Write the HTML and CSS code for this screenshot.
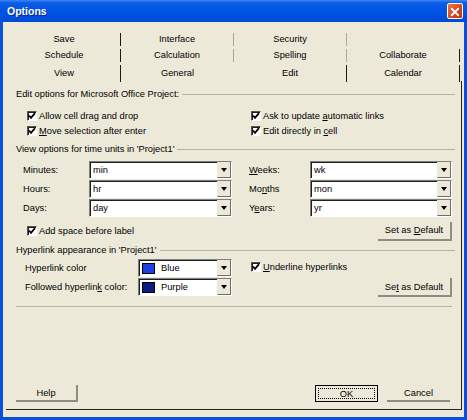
FILE: index.html
```html
<!DOCTYPE html>
<head>
	<link rel="stylesheet" href="styles.css">
</head>
<body>
	<div class="window">
		<div class="titlebar">
			<span class="title">Options</span>
			<span class="close">
				<svg width="16" height="16" viewBox="0 0 16 16">
					<path d="M4.5 4.5 L11.5 11.5 M11.5 4.5 L4.5 11.5" stroke="#fff" stroke-width="2.2" stroke-linecap="square" />
				</svg>
			</span>
		</div>
		<div class="client">
			<div class="tabs">
				<div class="tabrow">
					<div class="tab dark">Save</div>
					<div class="tab lite">Interface</div>
					<div class="tab lite">Security</div>
					<div class="tab"></div>
				</div>
				<div class="tabrow">
					<div class="tab dark">Schedule</div>
					<div class="tab lite">Calculation</div>
					<div class="tab lite">Spelling</div>
					<div class="tab dark">Collaborate</div>
				</div>
				<div class="tabrow last">
					<div class="tab dark">View</div>
					<div class="tab">General</div>
					<div class="tab dark">Edit</div>
					<div class="tab dark">Calendar</div>
				</div>
			</div>

			<div class="panel">
				<div class="legend first"><span>Edit options for Microsoft Office Project:</span></div>
				<div class="checks">
					<div class="check"><span class="box on"></span><span>Allow cell drag and drop</span></div>
					<div class="check"><span class="box on"></span><span>Ask to update <u>a</u>utomatic links</span></div>
					<div class="check"><span class="box on"></span><span><u>M</u>ove selection after enter</span></div>
					<div class="check"><span class="box on"></span><span>Edit directly in <u>c</u>ell</span></div>
				</div>

				<div class="legend second"><span>View options for time units in 'Project1'</span></div>
				<div class="units">
					<label class="lbl"><span>Minutes:</span></label>
					<div class="combo"><span class="val">min</span><span class="drop"></span></div>
					<span></span>
					<label class="lbl right"><span><u>W</u>eeks:</span></label>
					<div class="combo"><span class="val">wk</span><span class="drop"></span></div>

					<label class="lbl"><span>Hours:</span></label>
					<div class="combo"><span class="val">hr</span><span class="drop"></span></div>
					<span></span>
					<label class="lbl right"><span>Mo<u>n</u>ths</span></label>
					<div class="combo"><span class="val">mon</span><span class="drop"></span></div>

					<label class="lbl"><span>Days:</span></label>
					<div class="combo"><span class="val">day</span><span class="drop"></span></div>
					<span></span>
					<label class="lbl right"><span>Y<u>e</u>ars:</span></label>
					<div class="combo"><span class="val">yr</span><span class="drop"></span></div>
				</div>
				<div class="addrow">
					<div class="check"><span class="box on"></span><span>Add space before label</span></div>
					<div class="btn wide"><span>Set as <u>D</u>efault</span></div>
				</div>

				<div class="legend third"><span>Hyperlink appearance in 'Project1'</span></div>
				<div class="links">
					<span></span>
					<label class="lbl"><span>Hyperlink color</span></label>
					<div class="combo"><span class="swatch blue"></span><span class="val">Blue</span><span class="drop"></span></div>
					<span></span>
					<div class="check"><span class="box on"></span><span><u>U</u>nderline hyperlinks</span></div>

					<span></span>
					<label class="lbl"><span>Followed hyperlin<u>k</u> color:</span></label>
					<div class="combo"><span class="swatch purple"></span><span class="val">Purple</span><span class="drop"></span></div>
					<span></span>
					<div class="btnwrap"><div class="btn wide"><span>Se<u>t</u> as Default</span></div></div>
				</div>
				<div class="rule"></div>

				<div class="actions">
					<div class="btn"><span>Help</span></div>
					<div class="spacer"></div>
					<div class="btn ok"><span class="focus">OK</span></div>
					<div class="btn cancel"><span>Cancel</span></div>
				</div>
			</div>
		</div>
	</div>
	<script>
		// mark ticked boxes
		Array.prototype.forEach.call(document.querySelectorAll(".box.on"), function (box) {
			box.innerHTML = '<svg width="8" height="8" viewBox="0 0 8 8"><path d="M1 3.5 L3 5.8 L7 1.2" fill="none" stroke="#000" stroke-width="1.8" /></svg>';
		});
	</script>
</body>
</html>
```

FILE: styles.css
```css
* {
	box-sizing: border-box;
}

body {
	margin: 0;
	font-family: "Liberation Sans", Arial, sans-serif;
	font-size: 9.3px;
	color: #000;
}

.window {
	width: 467px;
	height: 420px;
	background: #0b50d9;
	display: flex;
	flex-direction: column;
}

.titlebar {
	height: 22px;
	display: flex;
	align-items: center;
	justify-content: space-between;
	padding: 0 4px 0 7px;
	background: linear-gradient(#3d86f4 0, #0a5be6 3px, #0055e4 50%, #004ad8 100%);
}

.title {
	color: #fff;
	font-weight: bold;
	font-size: 10.5px;
	text-shadow: 1px 1px 0 #0c2a8c;
}

.close {
	width: 16px;
	height: 16px;
	border: 1px solid #fff;
	border-radius: 2px;
	background: linear-gradient(135deg, #e8764e, #d9441c 60%, #c2320e);
	display: flex;
}

.client {
	flex: 1;
	margin: 0 3px 3px;
	background: #ece9d8;
	display: flex;
	flex-direction: column;
}

/* tabs */
.tabs {
	margin: 11px 0 0 5px;
	width: 452px;
}

.tabrow {
	display: grid;
	grid-template-columns: repeat(4, 113px);
	height: 13px;
	margin-bottom: 3px;
}

.tabrow.last {
	height: 16px;
	margin-bottom: 0;
}

.tab {
	text-align: center;
	line-height: 13px;
}

.tabrow.last .tab {
	line-height: 17px;
}

.tab.dark {
	border-right: 1px solid #1a1a1a;
}

.tab.lite {
	border-right: 1px solid #aaa89c;
}

/* panel */
.panel {
	flex: 1;
	margin: 0 0 7px 3px;
	width: 456px;
	padding: 0 9px 0 10px;
	border-right: 1px solid #222;
	border-bottom: 1px solid #222;
	display: flex;
	flex-direction: column;
}

.legend {
	display: flex;
	align-items: center;
	height: 13px;
}

.legend::after {
	content: "";
	flex: 1;
	border-top: 1px solid #b5b3a4;
	margin: 1px -3px 0 3px;
}

.legend.first {
	margin-top: 6px;
}

.legend.second {
	margin-top: 4px;
}

.legend.third {
	margin-top: 2px;
}

.checks {
	display: grid;
	grid-template-columns: 224px 1fr;
	grid-auto-rows: 15px;
	padding-left: 11px;
	margin-top: 8px;
}

.check {
	display: flex;
	align-items: center;
	height: 15px;
	white-space: nowrap;
}

.box {
	width: 10px;
	height: 10px;
	margin-right: 2px;
	background: #fff;
	border: 1px solid;
	border-color: #555 #fff #fff #555;
	box-shadow: inset 1px 1px 0 #1e1e1e;
	display: flex;
	align-items: center;
	justify-content: center;
}

.units {
	display: grid;
	grid-template-columns: 73px 143px 17px 61px 142px;
	grid-auto-rows: 18px;
	row-gap: 1px;
	margin-top: 6px;
}

.lbl {
	display: flex;
	align-items: center;
	padding-left: 7px;
	white-space: nowrap;
}

.lbl.right {
	padding-left: 0;
}

.combo {
	display: flex;
	align-items: center;
	background: #fff;
	border: 1px solid;
	border-color: #7f7f7f #fff #fff #7f7f7f;
	box-shadow: inset 1px 1px 0 #1e1e1e;
}

.val {
	flex: 1;
	padding-left: 3px;
}

.drop {
	width: 14px;
	height: 100%;
	background: #ece9d8;
	border-left: 1px solid #ece9d8;
	border-right: 1px solid #6d6d6d;
	border-bottom: 1px solid #6d6d6d;
	display: flex;
	align-items: center;
	justify-content: center;
}

.drop::before {
	content: "";
	border-left: 3.5px solid transparent;
	border-right: 3.5px solid transparent;
	border-top: 4px solid #000;
}

.swatch {
	width: 13px;
	height: 11px;
	margin-left: 3px;
	border: 1px solid #000;
}

.swatch.blue {
	background: #1d3fe6;
}

.swatch.purple {
	background: #0d1a82;
}

.swatch + .val {
	padding-left: 6px;
}

.addrow {
	display: flex;
	align-items: center;
	justify-content: space-between;
	height: 20px;
	margin-top: 4px;
	padding-left: 11px;
}

.links {
	display: grid;
	grid-template-columns: 2px 120px 94px 19px 1fr;
	grid-auto-rows: 18px;
	row-gap: 1px;
	margin-top: 3px;
}

.btnwrap {
	display: flex;
	justify-content: flex-end;
}

.rule {
	margin-top: 10px;
	border-top: 1px solid #b5b3a4;
}

/* buttons */
.btn {
	height: 17px;
	width: 62px;
	display: flex;
	align-items: center;
	justify-content: center;
	background: #ece9d8;
	border-right: 2px solid #8e8b80;
	border-bottom: 2px solid #8e8b80;
	white-space: nowrap;
}

.btn.wide {
	width: 74px;
	height: 19px;
}

.actions {
	display: flex;
	margin-top: auto;
	margin-bottom: 7px;
	padding-right: 2px;
}

.spacer {
	flex: 1;
}

.btn.ok {
	width: 63px;
	border: 1px solid #000;
	padding: 2px;
	margin-right: 9px;
}

.focus {
	flex: 1;
	height: 100%;
	border: 1px dotted #000;
	display: flex;
	align-items: center;
	justify-content: center;
}

.btn.cancel {
	width: 63px;
	border-right: 0;
}
```
